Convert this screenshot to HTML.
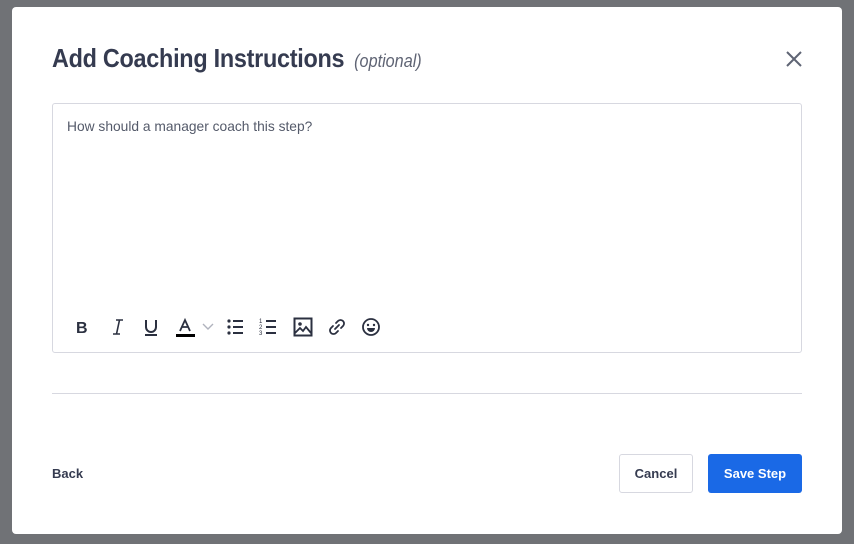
<!DOCTYPE html>
<html><head><style>
body{margin:0;width:854px;height:544px;background:#707276;font-family:"Liberation Sans",sans-serif;position:relative;overflow:hidden}
.m{position:absolute;left:12px;top:7px;width:830px;height:527px;background:#fff;border-radius:4px}
.t{position:absolute;left:40px;top:36px;font-size:26px;font-weight:bold;color:#353b50;letter-spacing:-0.3px;white-space:nowrap;transform:scaleX(0.9);transform-origin:0 0}
.t i{font-weight:normal;font-size:18px;color:#5f6474;margin-left:11px;letter-spacing:0}
.x{position:absolute;left:774px;top:44px}
.ed{position:absolute;left:40px;top:96px;width:748px;height:248px;border:1px solid #d7d8e0;border-radius:3px}
.ph{position:absolute;left:14px;top:14px;font-size:14px;color:#545a6a;transform:scaleX(0.985);transform-origin:0 0;white-space:nowrap}
.tb{position:absolute;left:20px;top:212px;height:22px}
.tb svg{position:absolute;top:0}
.hr{position:absolute;left:40px;top:386px;width:750px;height:1px;background:#d7d8e0}
.back{position:absolute;left:40px;top:459px;font-size:13px;font-weight:bold;color:#353b50}
.btn{position:absolute;top:447px;height:39px;border-radius:3px;font-size:13px;font-weight:bold;display:flex;align-items:center;justify-content:center;box-sizing:border-box}
.c{left:607px;width:74px;border:1px solid #d7d8e0;color:#353b50}
.s{left:696px;width:94px;background:#1a69e6;color:#fff}
</style></head><body>
<div class="m">
<div class="t">Add Coaching Instructions<i>(optional)</i></div>
<svg class="x" width="16" height="16" viewBox="0 0 16 16"><path d="M1 1L15 15M15 1L1 15" stroke="#5f6474" stroke-width="2"/></svg>
<div class="ed">
<div class="ph">How should a manager coach this step?</div>
<div class="tb">
<svg style="left:0" width="22" height="22" viewBox="0 0 22 22"><text x="3" y="17" font-family="Liberation Sans" font-weight="bold" font-size="16" fill="#2b3040">B</text></svg>
<svg style="left:34px" width="22" height="22" viewBox="0 0 22 22"><path d="M9 4h7M6 18h7M12.5 4L9.5 18" stroke="#2b3040" stroke-width="1.6" fill="none"/></svg>
<svg style="left:67px" width="22" height="22" viewBox="0 0 22 22"><path d="M6 4v7a5 5 0 0 0 10 0V4M5 19h12" stroke="#2b3040" stroke-width="2" fill="none"/></svg>
<svg style="left:101px" width="22" height="22" viewBox="0 0 22 22"><path d="M6 15l5-11 5 11M8 11h6" stroke="#2b3040" stroke-width="1.8" fill="none"/><rect x="2" y="18" width="19" height="3" fill="#000"/></svg>
<svg style="left:128px" width="14" height="22" viewBox="0 0 14 22"><path d="M2 8l5 5 5-5" stroke="#b0b3bd" stroke-width="1.4" fill="none"/></svg>
<svg style="left:152px" width="22" height="22" viewBox="0 0 22 22"><circle cx="4" cy="5" r="1.6" fill="#2b3040"/><circle cx="4" cy="11" r="1.6" fill="#2b3040"/><circle cx="4" cy="17" r="1.6" fill="#2b3040"/><path d="M8 5h10M8 11h10M8 17h10" stroke="#2b3040" stroke-width="2"/></svg>
<svg style="left:185px" width="22" height="22" viewBox="0 0 22 22"><text x="1" y="7" font-size="6" fill="#2b3040">1</text><text x="1" y="13" font-size="6" fill="#2b3040">2</text><text x="1" y="19" font-size="6" fill="#2b3040">3</text><path d="M8 5h10M8 11h10M8 17h10" stroke="#2b3040" stroke-width="2"/></svg>
<svg style="left:219px" width="22" height="22" viewBox="0 0 22 22"><rect x="2.5" y="2.5" width="17" height="17" stroke="#2b3040" stroke-width="2" fill="none"/><circle cx="8" cy="8" r="1.8" fill="#2b3040"/><path d="M3 17l5-5 3 3 3-4 5 6" stroke="#2b3040" stroke-width="1.8" fill="none"/></svg>
<svg style="left:253px" width="22" height="22" viewBox="0 0 22 22"><path d="M9 13l4-4M10 7l2-2a3 3 0 0 1 5 5l-2 2M12 15l-2 2a3 3 0 0 1-5-5l2-2" stroke="#2b3040" stroke-width="1.8" fill="none" stroke-linecap="round"/></svg>
<svg style="left:287px" width="22" height="22" viewBox="0 0 22 22"><circle cx="11" cy="11" r="8" stroke="#2b3040" stroke-width="1.8" fill="none"/><circle cx="8" cy="9" r="1.2" fill="#2b3040"/><circle cx="14" cy="9" r="1.2" fill="#2b3040"/><path d="M7 12h8a4 4 0 0 1-8 0z" fill="#2b3040"/></svg>
</div>
</div>
<div class="hr"></div>
<div class="back">Back</div>
<div class="btn c">Cancel</div>
<div class="btn s">Save Step</div>
</div>
</body></html>
